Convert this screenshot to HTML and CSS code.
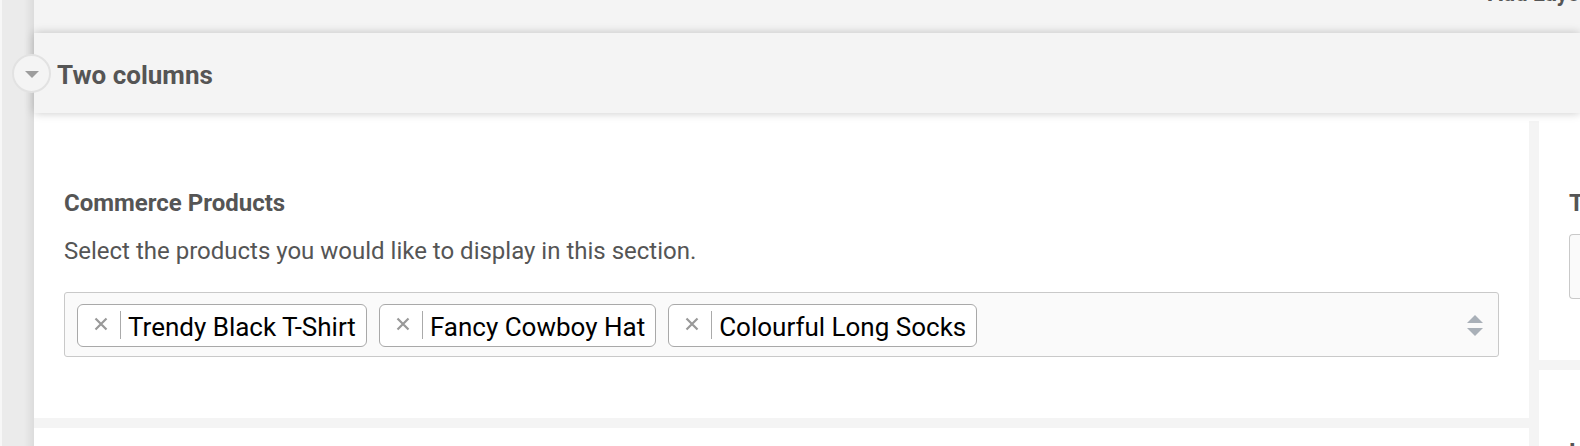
FILE: index.html
```html
<!DOCTYPE html>
<html>
<head>
<meta charset="utf-8">
<link rel="stylesheet" href="styles.css">
</head>
<body>
<div class="page">
  <div class="strip"></div>
  <div class="main">
    <div class="topbar"><span class="add-layout">Add Layout</span></div>
    <div class="section-head">
      <span class="toggle"><span class="tri"></span></span>
      <h2 class="section-title">Two columns</h2>
    </div>
    <div class="content">
      <div class="cols">
        <div class="col col-left">
          <div class="card card-main">
            <div class="field-label">Commerce Products</div>
            <div class="field-desc">Select the products you would like to display in this section.</div>
            <div class="select">
              <div class="tags">
                <span class="tag"><span class="tag-x"><svg class="x-icon" viewBox="0 0 16 16" width="16" height="16"><path d="M2.5 2.5 L13.5 13.5 M13.5 2.5 L2.5 13.5"/></svg></span><span class="tag-text">Trendy Black T-Shirt</span></span>
                <span class="tag"><span class="tag-x"><svg class="x-icon" viewBox="0 0 16 16" width="16" height="16"><path d="M2.5 2.5 L13.5 13.5 M13.5 2.5 L2.5 13.5"/></svg></span><span class="tag-text">Fancy Cowboy Hat</span></span>
                <span class="tag"><span class="tag-x"><svg class="x-icon" viewBox="0 0 16 16" width="16" height="16"><path d="M2.5 2.5 L13.5 13.5 M13.5 2.5 L2.5 13.5"/></svg></span><span class="tag-text">Colourful Long Socks</span></span>
              </div>
              <span class="arrows"><span class="up"></span><span class="down"></span></span>
            </div>
          </div>
          <div class="card card-rest"></div>
        </div>
        <div class="col col-right">
          <div class="card card-side">
            <div class="field-label">Title</div>
            <div class="side-input"></div>
          </div>
          <div class="card card-side2">
            <div class="field-label">Link</div>
          </div>
        </div>
      </div>
    </div>
  </div>
</div>
</body>
</html>
```

FILE: styles.css
```css
* { box-sizing: border-box; }
html, body { margin: 0; padding: 0; }
body {
  width: 1580px;
  height: 446px;
  overflow: hidden;
  font-family: Roboto, "Liberation Sans", sans-serif;
  background: #f4f4f4;
}
.page {
  display: flex;
  height: 446px;
}
.strip {
  width: 34px;
  flex: none;
  background: linear-gradient(to right, #f7f7f7 0, #f7f7f7 2px, #ebebeb 2px, #ebebeb 24px, #dcdcdc 34px);
}
.main {
  flex: 1;
  display: flex;
  flex-direction: column;
  min-width: 0;
}
.topbar {
  height: 33px;
  flex: none;
  background: #f4f4f4;
  overflow: hidden;
  display: flex;
  justify-content: flex-start;
  padding-left: 1454px;
}
.add-layout {
  font-size: 22px;
  font-weight: 700;
  color: #555;
  line-height: 22px;
  margin-top: -17px;
  white-space: nowrap;
}
.section-head {
  position: relative;
  z-index: 2;
  height: 80px;
  flex: none;
  background: #f4f4f4;
  box-shadow: 0 0 9px rgba(0, 0, 0, 0.22);
  display: flex;
  align-items: center;
  padding-left: 23px;
}
.toggle {
  position: absolute;
  left: -22px;
  top: 21px;
  width: 39px;
  height: 39px;
  border-radius: 50%;
  border: 2px solid #e2e2e2;
  background: #f4f4f4;
  display: flex;
  align-items: center;
  justify-content: center;
}
.tri {
  width: 0;
  height: 0;
  border-left: 7px solid transparent;
  border-right: 7px solid transparent;
  border-top: 7px solid #9d9d9d;
  margin-top: 2px;
}
.section-title {
  margin: 0;
  font-size: 26px;
  font-weight: 700;
  color: #555;
  line-height: 30px;
  margin-top: 4px;
}
.content {
  flex: 1;
  background: #fff;
  padding-top: 8px;
  min-height: 0;
}
.cols {
  display: grid;
  grid-template-columns: 1495px 1fr;
  column-gap: 10px;
  background: #f4f4f4;
  height: 100%;
}
.col {
  display: flex;
  flex-direction: column;
  row-gap: 10px;
  min-width: 0;
}
.card {
  background: #fff;
}
.card-main {
  height: 297px;
  flex: none;
  padding: 68px 30px 0 30px;
}
.card-rest { flex: 1; }
.field-label {
  font-size: 24px;
  font-weight: 700;
  color: #555;
  line-height: 28px;
  white-space: nowrap;
}
.field-desc {
  font-size: 24px;
  color: #555;
  line-height: 28px;
  margin-top: 20px;
}
.select {
  margin-top: 27px;
  height: 65px;
  border: 1px solid #c9c9c9;
  border-radius: 3px;
  background: #fafafa;
  display: flex;
  align-items: center;
  padding: 1px 15px 0 12px;
}
.tags {
  flex: 1;
  display: flex;
  gap: 12px;
}
.tag {
  display: flex;
  align-items: center;
  height: 43px;
  border: 1px solid #a9a9a9;
  border-radius: 6px;
  background: #fff;
  padding: 0 10px 0 0;
}
.tag-x {
  display: flex;
  align-items: flex-start;
  height: 28px;
  padding: 0 11px 0 15px;
  border-right: 1px solid #aaa;
}
.x-icon {
  display: block;
  margin-top: 5px;
}
.x-icon path {
  stroke: #999;
  stroke-width: 2.2;
  fill: none;
}
.tag-text {
  padding-left: 7px;
  padding-top: 4px;
  font-size: 26px;
  color: #000;
  line-height: 30px;
  white-space: nowrap;
}
.arrows {
  display: flex;
  flex-direction: column;
  gap: 5px;
}
.up {
  width: 0; height: 0;
  border-left: 8px solid transparent;
  border-right: 8px solid transparent;
  border-bottom: 8px solid #a9b0b8;
}
.down {
  width: 0; height: 0;
  border-left: 8px solid transparent;
  border-right: 8px solid transparent;
  border-top: 8px solid #a9b0b8;
}
.card-side {
  height: 239px;
  flex: none;
  padding: 68px 0 0 30px;
}
.side-input {
  margin-top: 17px;
  height: 65px;
  border: 1px solid #c9c9c9;
  border-right: none;
  border-radius: 4px 0 0 4px;
  background: #fafafa;
}
.card-side2 {
  flex: 1;
  padding: 68px 0 0 30px;
}
```
